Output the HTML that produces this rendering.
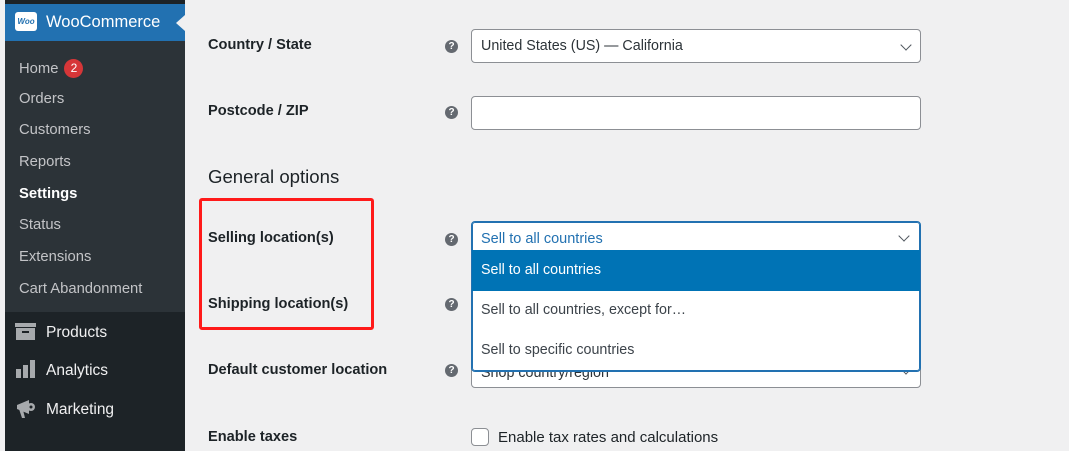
<!DOCTYPE html>
<html><head><meta charset="utf-8"><style>
*{box-sizing:border-box;margin:0;padding:0}
body{width:1069px;height:451px;overflow:hidden;background:#f0f0f1;font-family:"Liberation Sans",sans-serif;position:relative}
.sb{position:absolute;left:5px;top:0;width:180px;height:451px;background:#1d2327}
.hdr{position:absolute;left:5px;top:4px;width:180px;height:37px;background:#2271b1;color:#fff;font-size:16.5px}
.hdr .t{position:absolute;left:41px;top:9px}
.logo{position:absolute;left:10px;top:8px;width:22px;height:19px;background:#fff;border-radius:3px;color:#2271b1;font-size:8px;font-weight:bold;text-align:center;line-height:19px;font-style:italic}
.arrow{position:absolute;left:171px;top:11px;width:0;height:0;border-top:8px solid transparent;border-bottom:8px solid transparent;border-right:9px solid #f0f0f1}
.sub{position:absolute;left:5px;top:41px;width:180px;height:271px;background:#2c3338}
.sub div{position:absolute;left:14px;color:#c3c4c7;font-size:14.8px}
.sub .b{color:#fff;font-weight:bold}
.badge{display:inline-block;background:#d63638;color:#fff;border-radius:10px;width:19px;height:19px;text-align:center;font-size:12px;line-height:19px;margin-left:6px;vertical-align:1px}
.mi{position:absolute;left:46px;color:#f0f0f1;font-size:15.5px}
.lbl{position:absolute;left:208px;font-size:14.6px;font-weight:bold;color:#1d2327}
.q{position:absolute;left:445px;width:13px;height:13px;border-radius:50%;background:#646970;color:#fff;font-size:10px;font-weight:bold;text-align:center;line-height:13px}
.inp{position:absolute;left:471px;width:450px;height:34px;background:#fff;border:1px solid #8c8f94;border-radius:4px;font-size:14.3px;color:#2c3338;padding:8px 9px}
.chev{position:absolute;right:10px;top:11px;width:8px;height:8px;border-right:1.6px solid #50575e;border-bottom:1.6px solid #50575e;transform:rotate(45deg)}
</style></head><body>
<div class="sb"></div>
<div class="hdr"><div class="logo">Woo</div><span class="t">WooCommerce</span><div class="arrow"></div></div>
<div class="sub">
<div style="top:18px">Home<span class="badge">2</span></div>
<div style="top:50px">Orders</div>
<div style="top:81px">Customers</div>
<div style="top:113px">Reports</div>
<div class="b" style="top:145px">Settings</div>
<div style="top:176px">Status</div>
<div style="top:208px">Extensions</div>
<div style="top:240px">Cart Abandonment</div>
</div>
<svg style="position:absolute;left:15px;top:323px" width="21" height="20"><rect x="0" y="0" width="21" height="4" fill="#a7aaad"/><rect x="1" y="5" width="19" height="12" fill="#a7aaad"/><rect x="7" y="8" width="7" height="2" fill="#1d2327"/></svg>
<div class="mi" style="top:324px">Products</div>
<svg style="position:absolute;left:16px;top:359px" width="20" height="20"><rect x="0" y="10" width="5" height="9" fill="#a7aaad"/><rect x="7" y="6" width="5" height="13" fill="#a7aaad"/><rect x="14" y="1" width="5" height="18" fill="#a7aaad"/></svg>
<div class="mi" style="top:362px">Analytics</div>
<svg style="position:absolute;left:15px;top:398px" width="22" height="22"><path d="M2 7 L14 2 L14 16 L2 11 Z" fill="#a7aaad"/><circle cx="16" cy="9" r="4" fill="#a7aaad"/><circle cx="16" cy="9" r="1.5" fill="#1d2327"/><path d="M4 11 L7 20 L10 20 L8 12Z" fill="#a7aaad"/></svg>
<div class="mi" style="top:401px">Marketing</div>

<div class="lbl" style="top:37px">Country / State</div>
<div class="q" style="top:40px">?</div>
<div class="inp" style="top:29px">United States (US) — California<div class="chev"></div></div>

<div class="lbl" style="top:103px">Postcode / ZIP</div>
<div class="q" style="top:106px">?</div>
<div class="inp" style="top:96px"></div>

<div style="position:absolute;left:208px;top:166px;font-size:18.6px;color:#1d2327">General options</div>

<div class="lbl" style="top:230px">Selling location(s)</div>
<div class="q" style="top:233px">?</div>
<div class="lbl" style="top:296px">Shipping location(s)</div>
<div class="q" style="top:298px">?</div>
<div class="lbl" style="top:362px">Default customer location</div>
<div class="q" style="top:364px">?</div>
<div class="inp" style="top:355px;height:33px;padding-top:9px">Shop country/region<div class="chev" style="top:9px"></div></div>

<div style="position:absolute;left:471px;top:221px;width:450px;height:151px;background:#fff;border:1px solid #2271b1;border-radius:4px;box-shadow:0 0 0 1px #2271b1 inset"></div>
<div style="position:absolute;left:481px;top:231px;font-size:14.5px;color:#2271b1">Sell to all countries</div>
<div class="chev" style="position:absolute;left:900px;top:232px"></div>
<div style="position:absolute;left:472px;top:250px;width:448px;height:41px;background:#0073b5;color:#fff;font-size:14.3px;padding:12px 9px">Sell to all countries</div>
<div style="position:absolute;left:481px;top:302px;font-size:14.3px;color:#3c434a">Sell to all countries, except for…</div>
<div style="position:absolute;left:481px;top:342px;font-size:14.3px;color:#3c434a">Sell to specific countries</div>

<div style="position:absolute;left:199px;top:198px;width:175px;height:132px;border:3px solid #ff1a1a;border-radius:3px"></div>

<div class="lbl" style="top:429px">Enable taxes</div>
<div style="position:absolute;left:471px;top:428px;width:18px;height:18px;border:1px solid #8c8f94;border-radius:4px;background:#fff"></div>
<div style="position:absolute;left:498px;top:429px;font-size:15px;color:#1d2327">Enable tax rates and calculations</div>
</body></html>
